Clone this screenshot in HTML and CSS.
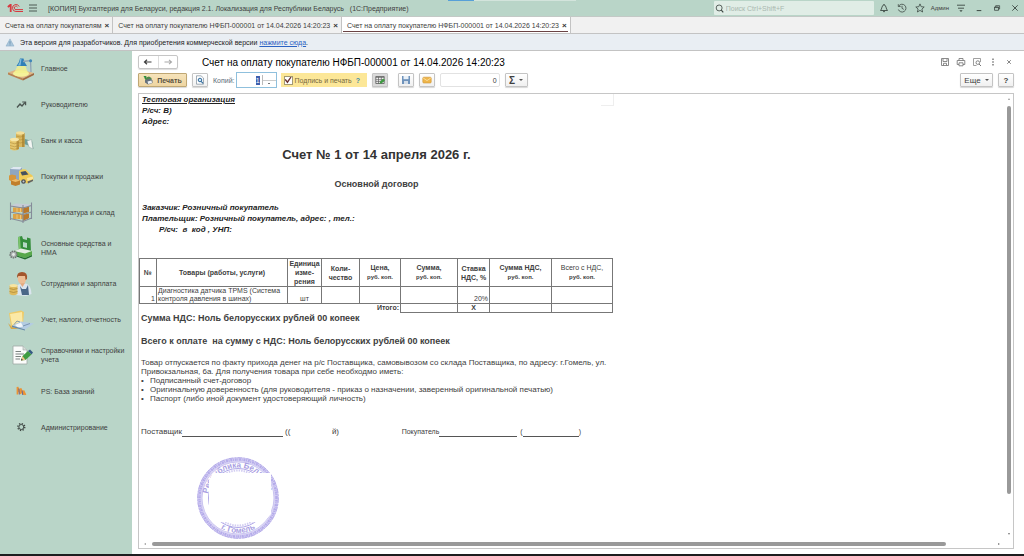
FILE: index.html
```html
<!DOCTYPE html>
<html lang="ru">
<head>
  <meta charset="UTF-8">
  <meta name="viewport" content="width=device-width, initial-scale=1.0">
  <title>Счет на оплату покупателю</title>
  <link rel="stylesheet" href="styles.css">
</head>
<body>
  <!-- Title bar -->
  <header class="titlebar">
    <div class="top-strip"></div>
    <svg class="logo" viewBox="0 0 16 10">
      <path d="M0.3 3.2 3 1H4.6V9H2.8V3.8L1.2 4.8Z" fill="#d8383f"/>
      <path d="M12.2 3.6A3.5 3.5 0 1 0 9 8.5H16M10.5 4.1A1.7 1.7 0 1 0 9 6.6H16" fill="none" stroke="#d8383f" stroke-width="1"/>
    </svg>
    <button class="icon-button menu-button" aria-label="Меню">
      <svg viewBox="0 0 10 10"><path d="M1 2H9M1 5H9M1 8H9" stroke="#4c5a54" stroke-width="1" fill="none"/></svg>
    </button>
    <span class="app-title">[КОПИЯ] Бухгалтерия для Беларуси, редакция 2.1. Локализация для Республики Беларусь &nbsp; (1С:Предприятие)</span>
    <label class="search">
      <svg viewBox="0 0 10 10"><circle cx="4.6" cy="4.4" r="3.3" fill="none" stroke="#39423e" stroke-width="0.9"/><path d="M7 6.8 9.2 9.2" stroke="#39423e" stroke-width="1.3"/></svg>
      <input type="text" placeholder="Поиск Ctrl+Shift+F" aria-label="Поиск">
    </label>
    <div class="title-actions">
      <button class="icon-button" aria-label="Уведомления"><svg viewBox="0 0 10 10"><path d="M1.5 7.5C3.2 6 2.6 2 5 1.8 7.4 2 6.8 6 8.5 7.5ZM4 8.3Q5 9.6 6 8.3M5 1V2" fill="none" stroke="#3c4843" stroke-width="0.9"/></svg></button>
      <button class="icon-button" aria-label="История"><svg viewBox="0 0 10 10"><path d="M1.8 3A3.9 3.9 0 1 1 1.4 6.5M1.3 1.2V3.5H3.6M5 2.8V5.3L6.8 6.4" fill="none" stroke="#3c4843" stroke-width="0.8"/></svg></button>
      <button class="icon-button" aria-label="Избранное"><svg viewBox="0 0 10 10"><path d="M5 0.9 6.2 3.7 9.2 4 6.9 6 7.6 9 5 7.4 2.4 9 3.1 6 0.8 4 3.8 3.7Z" fill="none" stroke="#3c4843" stroke-width="0.8"/></svg></button>
      <span class="user">Админ</span>
      <button class="icon-button" aria-label="Настройки"><svg viewBox="0 0 10 10"><path d="M1 2.2H9M2 5.2H8" stroke="#3c4843" stroke-width="0.9"/><path d="M3.4 7.3H6.6L5 9Z" fill="#3c4843"/></svg></button>
      <button class="icon-button" aria-label="Свернуть"><svg viewBox="0 0 10 10"><path d="M2.7 7.6H7.3" stroke="#3c4843" stroke-width="1"/></svg></button>
      <button class="icon-button" aria-label="Восстановить"><svg viewBox="0 0 10 10"><path d="M2.5 4H6.5V7.3H2.5ZM3.7 4V2.7H7.6V6H6.5M2.5 4.6H6.5" fill="none" stroke="#3c4843" stroke-width="0.8"/></svg></button>
      <button class="icon-button" aria-label="Закрыть"><svg viewBox="0 0 10 10"><path d="M2.3 2.3 7.7 7.7M7.7 2.3 2.3 7.7" stroke="#3c4843" stroke-width="0.9"/></svg></button>
    </div>
  </header>

  <!-- Open windows -->
  <nav class="tabs">
    <a href="#" class="tab">Счета на оплату покупателям <span class="tab-close">×</span></a>
    <a href="#" class="tab">Счет на оплату покупателю НФБП-000001 от 14.04.2026 14:20:23 <span class="tab-close">×</span></a>
    <a href="#" class="tab active">Счет на оплату покупателю НФБП-000001 от 14.04.2026 14:20:23 <span class="tab-close">×</span></a>
  </nav>

  <div class="notice">
    <svg viewBox="0 0 10 10"><path d="M5 1 9.4 9H0.6Z" fill="#a9c6dc" stroke="#86a9c4" stroke-width="0.6"/><path d="M5 3.6V6.4M5 7.2V8.2" stroke="#5f86a5" stroke-width="0.9"/></svg>
    <p>Эта версия для разработчиков. Для приобретения коммерческой версии <a href="#">нажмите сюда</a>.</p>
  </div>

  <div class="workspace">
    <!-- Sections -->
    <nav class="sidebar">
      <a href="#" class="section">
        <svg viewBox="0 0 26 24">
          <path d="M0 15.5 10 12 26 16 15 21.5Z" fill="#e0b483"/><path d="M0 15.5 15 21.5V23.5L0 17.5Z" fill="#b98252"/><path d="M15 21.5 26 16V18L15 23.5Z" fill="#a06a42"/>
          <ellipse cx="13" cy="16.5" rx="8" ry="3.2" fill="#f5f29a"/><path d="M10 8H17L20 16H6Z" fill="#f2f08c" opacity="0.8"/>
          <path d="M12 1.5H15.5L16.5 5 19 9H8.5L11 5Z" fill="#2f7fb8"/><path d="M12.2 2 11.8 5 10 8.5H12.5L13.5 2Z" fill="#7fbbe0"/>
          <path d="M15 4.5 22.5 3.5 23 15" fill="none" stroke="#8ea3b5" stroke-width="1.3"/><circle cx="22.6" cy="3.8" r="1.5" fill="#3e86b8"/>
        </svg>
        <span>Главное</span>
      </a>
      <a href="#" class="section">
        <svg viewBox="0 0 26 24"><path d="M9 14.5 12 11 14 13 17 9.5" fill="none" stroke="#4b5551" stroke-width="1.3"/><path d="M14.2 9H17.6V12.3" fill="none" stroke="#4b5551" stroke-width="1.2"/></svg>
        <span>Руководителю</span>
      </a>
      <a href="#" class="section">
        <svg viewBox="0 0 26 24">
          <path d="M13 14 17 10 24 12 25.5 20 22 17Z" fill="#6e9d96"/><path d="M19 12 23.5 10.5 25 20 21 18Z" fill="#f3f6f3" stroke="#93a8a2" stroke-width="0.5"/>
          <path d="M8 4V18H16.5V4Z" fill="#d9b75c"/><path d="M14 4V18H16.5V4Z" fill="#b58f3a"/><ellipse cx="12.2" cy="4" rx="4.2" ry="1.7" fill="#f3de98"/>
          <path d="M8 7Q12 9 16.5 7M8 10Q12 12 16.5 10M8 13Q12 15 16.5 13" fill="none" stroke="#a98435" stroke-width="0.5"/>
          <path d="M2 10.5V20Q6.5 23 11 20V10.5Z" fill="#e6c76e"/><path d="M8.5 11V21L11 20V10.5Z" fill="#bb9643"/><ellipse cx="6.5" cy="10.5" rx="4.5" ry="1.8" fill="#f7e6a8"/>
          <path d="M2 13.5Q6.5 16 11 13.5M2 16.5Q6.5 19 11 16.5M2 19Q6.5 21.5 11 19" fill="none" stroke="#a98435" stroke-width="0.5"/>
        </svg>
        <span>Банк и касса</span>
      </a>
      <a href="#" class="section">
        <svg viewBox="0 0 26 24">
          <path d="M2 5 5 3H14V16H2Z" fill="#8fa6c0"/><path d="M2 5 5 3H14L12 5.5Z" fill="#dfe8f1"/>
          <path d="M11 7Q13 4.500 18 5.500L22 10Q25.500 11 25.500 14.500L25 17 19 19.500 11 16Z" fill="#f0cb55"/><path d="M12.500 8 17.500 7 20.500 10.500 14 11.500Z" fill="#46525e"/><path d="M19 14 25 12.500V15L19.500 17Z" fill="#f9e59b"/>
          <circle cx="15.500" cy="17.500" r="2.300" fill="#4c5158"/><circle cx="15.500" cy="17.500" r="1" fill="#c4c8cc"/><path d="M19.500 17.500 25 15.500V17L20 19.500Z" fill="#5d6268"/>
          <path d="M1 11.500 4 10.500 8 11.500V16L4 17.500 1 16Z" fill="#d6963c"/><path d="M3 16.500 8 15 12 16.500V20.500L7.500 22 3 20.500Z" fill="#c17f2c"/><path d="M3 16.500 8 15 12 16.500 7.500 18Z" fill="#efbc6a"/>
        </svg>
        <span>Покупки и продажи</span>
      </a>
      <a href="#" class="section">
        <svg viewBox="0 0 26 24">
          <path d="M2 6 8 3.5 24 4.5 15 8Z" fill="#c6ccd6"/><path d="M5 7.5H20V12H5ZM5 14H20V19H5Z" fill="#dca246"/><path d="M15 8.5 21 6.5V12L15 13.5ZM15 15 21 13.5V18L15 21Z" fill="#b9782b"/>
          <path d="M9 8V12.5M12.5 8V12.5M9 14.5V19M12.5 15V20" stroke="#f4cf86" stroke-width="0.8"/>
          <path d="M2.5 2.5V20M15 5V23M23.5 2.5V19M2.5 6 15 8 23.5 5.5M2.5 12 15 14.5 23.5 12M2.5 18.5 15 21.5 23.5 18" fill="none" stroke="#858c99" stroke-width="1.1"/>
        </svg>
        <span>Номенклатура и склад</span>
      </a>
      <a href="#" class="section">
        <svg viewBox="0 0 26 24">
          <path d="M10 1 14 0 15 3 19 4V1.5L22.5 2.5 23 17 11 15Z" fill="#348d3b"/><path d="M10 1 12 1 13 15 11 15Z" fill="#7cc46c"/><path d="M15 6 19 7V12L15 11Z" fill="#b6d8c5"/>
          <path d="M6 15 13 12.5 24 15V19L17 22 7 19Z" fill="#58a84c"/><path d="M6 15 13 12.5 24 15 17 17.5Z" fill="#e4ece4"/><path d="M7 19 17 22 24 19V20.5L17 23.5 7 20Z" fill="#216d2c"/>
          <circle cx="5.5" cy="18.5" r="3.4" fill="#a9afae" stroke="#6a706e" stroke-width="1.4" stroke-dasharray="1.4 0.9"/><circle cx="5.5" cy="18.5" r="1.4" fill="#e5e9e7"/>
        </svg>
        <span>Основные средства и НМА</span>
      </a>
      <a href="#" class="section">
        <svg viewBox="0 0 26 24">
          <path d="M7 23Q6 13 12 12L18 11.5Q23 13 23.5 22L18 24Z" fill="#dbe5ee"/><path d="M12 14 14 23H21L20 13 18 17H14Z" fill="#4a6787"/>
          <ellipse cx="14" cy="6.8" rx="4.2" ry="5.2" fill="#eebd94"/><path d="M9 6Q8.5 0 14 0 20 0 19 7L17.6 8 17 4 10.5 4Z" fill="#a3552c"/><path d="M12 11.5 14.5 15 17 11Z" fill="#e5aa80"/>
          <path d="M1.5 13.5V22Q5.5 24.5 9.5 22V13.5Z" fill="#dfba5c"/><ellipse cx="5.5" cy="13.5" rx="4" ry="1.6" fill="#f7e4a0"/><path d="M1.5 16.5Q5.5 18.5 9.5 16.5M1.5 19.5Q5.5 21.5 9.5 19.5" fill="none" stroke="#a17c2e" stroke-width="0.6"/>
        </svg>
        <span>Сотрудники и зарплата</span>
      </a>
      <a href="#" class="section">
        <svg viewBox="0 0 26 24">
          <path d="M1 5 13 2.5 16 4 15 16 3 19Z" fill="#efcb68"/><path d="M2 6 14 4 14.5 14 4 17Z" fill="#fbe9a6"/><path d="M0 15 4 19 11 21 3 21Z" fill="#d6a94c"/>
          <path d="M4 17.5 13 13.5 26 15.5 17 21.5Z" fill="#b4cce3"/><path d="M7 17 13 14.5 15 18.5 10 19.5Z" fill="#f4f7fa"/><path d="M15 18 22 15.5M6 16.5 9 13 12 14" stroke="#6c89a6" stroke-width="0.8" fill="none"/><path d="M4 17.5 17 21.5V22.5L4 19Z" fill="#6586a8"/>
        </svg>
        <span>Учет, налоги, отчетность</span>
      </a>
      <a href="#" class="section">
        <svg viewBox="0 0 26 24">
          <path d="M5 3H15L19 7V21H5Z" fill="#fbfcfb" stroke="#9fa8a4" stroke-width="0.8"/><path d="M15 3V7H19" fill="#d8dedb" stroke="#9fa8a4" stroke-width="0.6"/>
          <path d="M7.5 8.5H13M7.5 11H16M7.5 13.5H13M7.5 16H12" stroke="#6c7572" stroke-width="0.9"/>
          <path d="M13 17.5 14.5 13 20 8 23.5 11.5 17.5 17Z" fill="#3f9c42"/><path d="M20 8 22 6.5 25 9.5 23.5 11.5Z" fill="#355a83"/><path d="M13 17.5 14.5 13 17.5 17Z" fill="#eec388"/><path d="M13 17.5 13.6 15.6 14.9 17Z" fill="#333"/>
        </svg>
        <span>Справочники и настройки учета</span>
      </a>
      <a href="#" class="section">
        <svg viewBox="0 0 26 24"><path d="M9.5 15.5V8L12.5 15V9.5L15.5 15.5V11.5L17.5 16" fill="none" stroke="#ec9233" stroke-width="1.8"/><path d="M10.8 9.5 11.4 15.5M14 11.5 14.8 16" stroke="#5a62a0" stroke-width="0.9"/></svg>
        <span>PS: База знаний</span>
      </a>
      <a href="#" class="section">
        <svg viewBox="0 0 26 24"><circle cx="13.3" cy="12" r="2.5" fill="none" stroke="#3e4643" stroke-width="1"/><circle cx="13.3" cy="12" r="3.5" fill="none" stroke="#3e4643" stroke-width="1.3" stroke-dasharray="1.3 1.45"/></svg>
        <span>Администрирование</span>
      </a>
    </nav>

    <main class="window">
      <div class="window-head">
        <div class="history-buttons">
          <button aria-label="Назад"><svg viewBox="0 0 10 8"><path d="M1.5 4H8.5M4 1.8 1.5 4 4 6.2" fill="none" stroke="#3d3d3d" stroke-width="1.2"/></svg></button>
          <button aria-label="Вперед"><svg viewBox="0 0 10 8"><path d="M1.5 4H8.5M6 1.8 8.5 4 6 6.2" fill="none" stroke="#a8a8a8" stroke-width="1.1"/></svg></button>
        </div>
        <h1>Счет на оплату покупателю НФБП-000001 от 14.04.2026 14:20:23</h1>
        <div class="window-actions">
          <button class="icon-button" aria-label="Сохранить"><svg viewBox="0 0 10 10"><path d="M1.5 1.5H8.5V8.5H1.5ZM3 1.5V4.5H7V1.5M3.5 8.5V6.3H6.5V8.5" fill="none" stroke="#7e7e7e" stroke-width="0.9"/></svg></button>
          <button class="icon-button" aria-label="Печать"><svg viewBox="0 0 10 10"><path d="M3 3.5V1.5H7V3.5M3 7.5H1.2V3.5H8.8V7.5H7M3 5.8H7V8.8H3Z" fill="none" stroke="#7e7e7e" stroke-width="0.9"/></svg></button>
          <button class="icon-button" aria-label="Просмотр"><svg viewBox="0 0 10 10"><path d="M8.5 5V1.5H1.5V8.5H4.5" fill="none" stroke="#888" stroke-width="0.8"/><circle cx="5.8" cy="5.6" r="1.8" fill="none" stroke="#777" stroke-width="0.9"/><path d="M7 7 9 9" stroke="#777" stroke-width="1"/></svg></button>
          <button class="icon-button" aria-label="Меню окна"><svg viewBox="0 0 10 10"><path d="M5 1.6V3M5 4.3V5.7M5 7V8.4" stroke="#666" stroke-width="1.3"/></svg></button>
          <button class="icon-button" aria-label="Закрыть окно"><svg viewBox="0 0 10 10"><path d="M3.2 3.2 6.8 6.8M6.8 3.2 3.2 6.8" stroke="#777" stroke-width="0.9"/></svg></button>
        </div>
      </div>

      <!-- Toolbar -->
      <div class="toolbar">
        <button class="btn print">
          <svg viewBox="0 0 10 10"><path d="M1.5 3 6 1.5 8.5 3V5L3 6Z" fill="#4f8a4a"/><path d="M0.5 1 3.5 1 2.5 4.5Z" fill="#2f8f3d"/><path d="M2 5 7 3.8 9.5 5.2V8L5 9.4 2 7.5Z" fill="#65707c"/><path d="M4.5 6.5 8.5 5.6 9 8 5.2 9Z" fill="#eef2f6"/></svg>
          Печать
        </button>
        <button class="btn square" aria-label="Предварительный просмотр"><svg viewBox="0 0 10 10"><path d="M1.5 0.8H6L8.5 3V9.2H1.5Z" fill="#fff" stroke="#7e8d9a" stroke-width="0.7"/><circle cx="5" cy="5" r="1.8" fill="#cfe4f4" stroke="#2f6a9c" stroke-width="1"/><path d="M6.2 6.3 8 8.3" stroke="#2f6a9c" stroke-width="1.2"/></svg></button>
        <label class="copies-label" for="copies">Копий:</label>
        <div class="copies">
          <input type="text" id="copies" value="1">
          <div class="spin"><button aria-label="Больше"></button><button aria-label="Меньше"></button></div>
        </div>
        <div class="stamp-option">
          <input type="checkbox" id="withStamp" checked>
          <label for="withStamp">Подпись и печать</label>
          <a href="#" class="help">?</a>
        </div>
        <button class="btn square pressed" aria-label="Редактирование"><svg viewBox="0 0 10 10"><path d="M0.8 1.5H9.2V8.5H0.8Z" fill="#f4f4f4" stroke="#5c5c5c" stroke-width="0.8"/><path d="M0.8 2.4H9.2M0.8 4.7H9.2M0.8 6.6H9.2M3.5 2V8.5M6.3 2V8.5" stroke="#5c5c5c" stroke-width="0.7"/><path d="M4.5 8.8 5.2 6.4 8.3 3.5 10 5.2 6.8 8.2Z" fill="#3f9c42"/></svg></button>
        <button class="btn square spaced" aria-label="Сохранить файл"><svg viewBox="0 0 10 10"><path d="M1 1H9V9H1Z" fill="#6f93bb"/><path d="M2.5 1H7.5V4.2H2.5Z" fill="#eaf1f8"/><path d="M3 6H7V9H3Z" fill="#d4dee9"/></svg></button>
        <button class="btn square" aria-label="Отправить"><svg viewBox="0 0 10 10"><rect x="0.8" y="2.2" width="8.4" height="5.8" rx="1" fill="#eeb54a" stroke="#cf9533" stroke-width="0.6"/><path d="M1.2 3 5 5.6 8.8 3" fill="none" stroke="#fae0a4" stroke-width="0.9"/></svg></button>
        <input class="sum-field" type="text" value="0" aria-label="Сумма">
        <button class="btn sigma">Σ <i class="caret"></i></button>
        <button class="btn more">Еще <i class="caret"></i></button>
        <button class="btn question">?</button>
      </div>

      <!-- Printed form -->
      <div class="viewer">
        <div class="page">
          <span class="page-edge"></span>
          <div class="party">
            <p><u>Тестовая организация</u></p>
            <p>Р/сч: В)</p>
            <p>Адрес:</p>
          </div>
          <h2>Счет № 1 от 14 апреля 2026 г.</h2>
          <h3>Основной договор</h3>
          <div class="party customer">
            <p>Заказчик: Розничный покупатель</p>
            <p>Плательщик: Розничный покупатель, адрес: , тел.:</p>
            <p class="indent">Р/сч: &nbsp;в &nbsp;код , УНП:</p>
          </div>
          <table class="goods">
            <colgroup>
              <col class="c-num"><col class="c-name"><col class="c-unit"><col class="c-qty"><col class="c-price"><col class="c-sum"><col class="c-rate"><col class="c-vat"><col class="c-total">
            </colgroup>
            <thead>
              <tr>
                <th>№</th>
                <th>Товары (работы, услуги)</th>
                <th class="tight">Единица изме-<br>рения</th>
                <th>Коли-<br>чество</th>
                <th>Цена,<br><small>руб. коп.</small></th>
                <th>Сумма,<br><small>руб. коп.</small></th>
                <th>Ставка НДС, %</th>
                <th>Сумма НДС,<br><small>руб. коп.</small></th>
                <th class="light">Всего с НДС,<br><small>руб. коп.</small></th>
              </tr>
            </thead>
            <tbody>
              <tr>
                <td class="right">1</td>
                <td>Диагностика датчика TPMS (Система контроля давления в шинах)</td>
                <td class="center">шт</td>
                <td></td>
                <td></td>
                <td></td>
                <td class="right">20%</td>
                <td></td>
                <td></td>
              </tr>
            </tbody>
            <tfoot>
              <tr>
                <td class="total-label" colspan="5">Итого:</td>
                <td></td>
                <td class="center">Х</td>
                <td></td>
                <td></td>
              </tr>
            </tfoot>
          </table>
          <p class="amount">Сумма НДС: Ноль белорусских рублей 00 копеек</p>
          <p class="amount">Всего к оплате &nbsp;на сумму с НДС: Ноль белорусских рублей 00 копеек</p>
          <div class="terms">
            <p>Товар отпускается по факту прихода денег на р/с Поставщика, самовывозом со склада Поставщика, по адресу: г.Гомель, ул. Привокзальная, 6а. Для получения товара при себе необходмо иметь:</p>
            <ul>
              <li>Подписанный счет-договор</li>
              <li>Оригинальную доверенность (для руководителя - приказ о назначении, заверенный оригинальной печатью)</li>
              <li>Паспорт (либо иной документ удостоверяющий личность)</li>
            </ul>
          </div>
          <div class="signatures">
            <div class="sign">Поставщик<span class="line"></span><span class="name"><span>((</span><span>й)</span></span></div>
            <div class="sign buyer">Покупатель<span class="line"></span><span class="bracket">(</span><span class="line short"></span>)</div>
          </div>
          <svg class="stamp" viewBox="0 0 84 84">
            <defs>
              <path id="arcTop" d="M11.5 42A30.5 30.5 0 0 1 72.5 42"/>
              <path id="arcBottom" d="M7 42A35 35 0 0 0 77 42"/>
            </defs>
            <circle cx="42" cy="42" r="38.5" fill="none" stroke="#dad5f5" stroke-width="4.5"/>
            <circle cx="42" cy="42" r="40.3" fill="none" stroke="#aaa0e5" stroke-width="0.8" stroke-dasharray="5 1 2 1"/>
            <circle cx="42" cy="42" r="38.5" fill="none" stroke="#b5acea" stroke-width="2.5" stroke-dasharray="1 0.8 2 0.6"/>
            <circle cx="42" cy="42" r="36" fill="none" stroke="#b5acea" stroke-width="0.7"/>
            <circle cx="42" cy="42" r="29.5" fill="none" stroke="#b0a7e8" stroke-width="1"/>
            <circle cx="42" cy="42" r="27.5" fill="none" stroke="#d3cef2" stroke-width="2" stroke-dasharray="1.5 1"/>
            <text class="stamp-text"><textPath href="#arcTop" startOffset="50%">Республика Беларусь</textPath></text>
            <text class="stamp-text"><textPath href="#arcBottom" startOffset="50%">г. Гомель</textPath></text>
            <path d="M17 17H75V58L68 66H20L13 57V24Z" fill="#fff"/>
          </svg>
        </div>
        <div class="scroll-y"><i class="arrow up"></i><span class="thumb"></span><i class="arrow down"></i></div>
        <div class="scroll-x"><i class="arrow left"></i><span class="thumb"></span><i class="arrow right"></i></div>
      </div>
    </main>
  </div>
  <div class="taskbar"></div>
</body>
</html>
```
FILE: styles.css
```css
* {
  box-sizing: border-box;
}

body {
  margin: 0;
  height: 100vh;
  display: flex;
  flex-direction: column;
  overflow: hidden;
  font-family: "Liberation Sans", Arial, sans-serif;
  font-size: 7px;
  color: #404040;
  background: #fff;
}

p, h1, h2, h3, ul {
  margin: 0;
  padding: 0;
}

button, input {
  font-family: inherit;
  font-size: inherit;
  color: inherit;
  margin: 0;
  padding: 0;
}

a {
  color: inherit;
  text-decoration: none;
}

.icon-button {
  display: block;
  width: 10px;
  height: 10px;
  border: none;
  background: none;
}

.icon-button svg {
  display: block;
  width: 10px;
  height: 10px;
}

/* Title bar */
.titlebar {
  position: relative;
  display: flex;
  align-items: center;
  height: 16px;
  padding: 0 4px 0 7px;
  background: #b9d5c8;
  flex-shrink: 0;
}

.top-strip {
  position: absolute;
  top: 0;
  left: 448px;
  width: 128px;
  height: 1px;
  background: linear-gradient(to right, #57a0d8 26px, #d3e4dc 26px);
}

.logo {
  width: 16px;
  height: 10px;
}

.menu-button {
  margin-left: 5px;
}

.app-title {
  margin-left: 10px;
  white-space: nowrap;
}

.search {
  display: flex;
  align-items: center;
  gap: 2px;
  width: 160px;
  height: 14px;
  margin-left: auto;
  padding-left: 1px;
  background: #e0ede6;
  border-radius: 1px;
}

.search svg {
  width: 9px;
  height: 9px;
}

.search input {
  flex: 1;
  min-width: 0;
  border: none;
  background: none;
  outline: none;
}

.search input::placeholder {
  color: #a9b8b0;
}

.title-actions {
  display: flex;
  align-items: center;
  gap: 8px;
  margin-left: 5px;
}

.user {
  font-size: 6px;
  margin: 0 -1px 0 -2px;
}

/* Tabs */
.tabs {
  display: flex;
  height: 18px;
  background: #f1f1f1;
  border-top: 1px solid #c3c9c6;
  border-bottom: 1px solid #c3c3c3;
  flex-shrink: 0;
}

.tab {
  display: flex;
  align-items: center;
  gap: 3px;
  padding: 0 3px 0 5px;
  border-right: 1px solid #c3c3c3;
  white-space: nowrap;
}

.tab.active {
  background: linear-gradient(#6a4344, #6a4344) no-repeat 1px 14px / calc(100% - 3px) 1px, #fff;
}

.tab-close {
  font-size: 8px;
  font-weight: bold;
  color: #333;
}

/* Developer notice */
.notice {
  display: flex;
  align-items: center;
  gap: 5px;
  height: 17px;
  padding: 0 5px;
  background: #e9eef3;
  border-bottom: 1px solid #c3c3c3;
  color: #222;
  flex-shrink: 0;
}

.notice svg {
  width: 10px;
  height: 9px;
}

.notice a {
  color: #2a62c4;
  text-decoration: underline;
}

.workspace {
  display: flex;
  flex: 1;
  min-height: 0;
}

/* Sections */
.sidebar {
  display: grid;
  grid-auto-rows: 1fr;
  width: 132px;
  padding: 0 6px 109px 8px;
  background: #b9d5c8;
  flex-shrink: 0;
}

.section {
  display: flex;
  align-items: center;
  gap: 7px;
  line-height: 9px;
}

.section svg {
  width: 26px;
  height: 24px;
  flex-shrink: 0;
}

/* Window */
.window {
  display: flex;
  flex-direction: column;
  flex: 1;
  min-width: 0;
  padding: 4px 10px 5px 6px;
}

.window-head {
  display: flex;
  align-items: center;
  height: 14px;
}

.history-buttons {
  display: flex;
  width: 40px;
  height: 14px;
  border: 1px solid #c6c6c6;
  border-radius: 2px;
  box-shadow: 0 1px 1px #ddd;
}

.history-buttons button {
  display: flex;
  align-items: center;
  justify-content: center;
  flex: 1;
  border: none;
  background: none;
}

.history-buttons button + button {
  border-left: 1px solid #ddd;
}

.history-buttons svg {
  width: 10px;
  height: 8px;
}

h1 {
  margin-left: 24px;
  font-size: 10px;
  font-weight: normal;
  color: #000;
  white-space: nowrap;
}

.window-actions {
  display: flex;
  gap: 6px;
  margin-left: auto;
}

/* Toolbar */
.toolbar {
  display: flex;
  align-items: center;
  height: 16px;
  margin: 3px 0 5px;
}

.btn {
  display: flex;
  align-items: center;
  justify-content: center;
  gap: 4px;
  height: 14px;
  border: 1px solid #c4c4c4;
  border-radius: 1px;
  background: linear-gradient(#fff, #f0f0f0);
  box-shadow: 0 1px 1px #d8d8d8;
}

.btn svg {
  width: 10px;
  height: 10px;
}

.print {
  width: 49px;
  margin-right: 5px;
  border-color: #bfa774;
  background: linear-gradient(#f6e3ba, #eed5a1);
  font-weight: bold;
  color: #5a5242;
}

.square {
  width: 16px;
}

.pressed {
  background: #dadada;
}

.square.spaced {
  margin-left: 10px;
  margin-right: 5px;
}

.copies-label {
  margin: 0 1px 0 5px;
  color: #5b6b78;
}

.copies {
  display: flex;
  align-items: center;
  width: 41px;
  height: 16px;
  margin-right: 4px;
  border: 1px solid #8fc0dd;
}

.copies input {
  flex: 1;
  min-width: 0;
  height: 10px;
  padding-right: 2px;
  border: none;
  border-right: 1px solid #bbb;
  outline: none;
  text-align: right;
  color: #fff;
  background: linear-gradient(#3f5fae, #3f5fae) no-repeat right 2px center / 4px 9px;
}

.spin {
  display: flex;
  flex-direction: column;
  width: 13px;
}

.spin button {
  height: 6px;
  border: none;
  background: radial-gradient(#777 1px, transparent 1px);
}

.spin button + button {
  border-top: 1px solid #ccc;
}

.stamp-option {
  display: flex;
  align-items: center;
  gap: 2px;
  width: 86px;
  height: 14px;
  margin-right: 5px;
  padding-left: 3px;
  background: #fce798;
  color: #776a3f;
}

.stamp-option input {
  appearance: none;
  display: grid;
  place-items: center;
  width: 9px;
  height: 9px;
  border: 1px solid #a39a74;
  background: #fff;
}

.stamp-option input:checked::before {
  content: "";
  width: 7px;
  height: 7px;
  background: #6d3434;
  clip-path: polygon(0 45%, 18% 35%, 40% 65%, 88% 0, 100% 10%, 42% 100%);
}

.help {
  margin-left: 2px;
  font-weight: bold;
  color: #3d8ca8;
}

.sum-field {
  width: 60px;
  height: 14px;
  margin: 0 5px;
  padding-right: 2px;
  border: 1px solid #e2e2e2;
  border-radius: 2px;
  text-align: right;
}

.sigma {
  width: 23px;
  font-size: 10px;
  font-weight: bold;
}

.caret {
  border: 2px solid transparent;
  border-top-color: #555;
  border-bottom: none;
}

.more {
  width: 33px;
  margin-left: auto;
  margin-right: 5px;
  font-size: 8px;
}

.question {
  width: 16px;
  font-size: 8px;
  font-weight: bold;
}

/* Document viewer */
.viewer {
  display: grid;
  grid-template-columns: 1fr 8px;
  grid-template-rows: 1fr 8px;
  flex: 1;
  min-height: 0;
  border: 1px solid #c6c6c6;
}

.page {
  position: relative;
  width: 475px;
  font-size: 7px;
  overflow: hidden;
}

.page-edge {
  position: absolute;
  top: 0;
  right: 0;
  width: 13px;
  height: 12px;
  border-right: 1px solid #eee;
  border-bottom: 1px solid #eee;
}

.party {
  padding-left: 3px;
  font-size: 8px;
  font-weight: bold;
  font-style: italic;
  line-height: 11px;
  color: #222;
}

.indent {
  padding-left: 17px;
}

h2 {
  margin-top: 20px;
  font-size: 13px;
  line-height: 16px;
  text-align: center;
  color: #333;
}

h3 {
  margin-top: 15px;
  font-size: 9px;
  line-height: 12px;
  text-align: center;
}

.customer {
  margin: 12px 0 23px;
}

.goods {
  width: 473px;
  table-layout: fixed;
  border-collapse: collapse;
  line-height: 9px;
}

.goods th,
.goods td {
  padding: 0 1px;
  border: 1px solid #777;
}

.goods th {
  height: 27px;
}

.goods small {
  font-size: 6px;
  font-weight: bold;
}

.goods .light {
  font-weight: normal;
}

.goods tbody td {
  height: 17px;
  line-height: 8px;
  vertical-align: bottom;
}

.goods tfoot td {
  height: 9px;
  line-height: 8px;
  font-weight: bold;
}

.goods .total-label {
  border-left: none;
  border-bottom: none;
  text-align: right;
}

.goods .right {
  text-align: right;
}

.goods .center {
  text-align: center;
}

.goods .tight {
  padding: 0;
}

.c-num { width: 17px; }
.c-name { width: 131px; }
.c-unit { width: 34px; }
.c-qty { width: 38px; }
.c-price { width: 41px; }
.c-sum { width: 57px; }
.c-rate { width: 32px; }
.c-vat { width: 62px; }
.c-total { width: 61px; }

.amount {
  padding-left: 2px;
  font-size: 9px;
  font-weight: bold;
  line-height: 10px;
}

.amount + .amount {
  margin-top: 13px;
}

.terms {
  margin-top: 12px;
  padding-left: 2px;
  font-size: 8px;
  line-height: 9px;
}

.terms ul {
  list-style: none;
}

.terms li::before {
  content: "•";
  display: inline-block;
  width: 9px;
}

.signatures {
  display: flex;
  justify-content: space-between;
  align-items: flex-end;
  margin-top: 23px;
  padding: 0 33px 0 2px;
  line-height: 11px;
}

.sign {
  display: flex;
  font-size: 8px;
}

.sign .line {
  width: 101px;
  border-bottom: 1px solid #555;
}

.name {
  display: flex;
  justify-content: space-between;
  width: 54px;
  margin-left: 2px;
}

.buyer {
  font-size: 7px;
}

.buyer .line {
  width: 78px;
}

.bracket {
  margin-left: 3px;
}

.buyer .line.short {
  width: 56px;
}

.stamp {
  display: block;
  width: 84px;
  height: 84px;
  margin: 19px 0 0 57px;
}

.stamp-text {
  font-size: 8px;
  font-weight: bold;
  fill: #a89eE2;
  text-anchor: middle;
}

/* Scrollbars */
.scroll-y,
.scroll-x {
  display: flex;
  align-items: center;
}

.scroll-y {
  flex-direction: column;
  padding: 3px 0 4px;
}

.scroll-x {
  padding: 0 4px;
}

.thumb {
  background: #999;
  border-radius: 2px;
}

.scroll-y .thumb {
  width: 4px;
  flex: 1;
  margin: 6px 0 39px;
}

.scroll-x .thumb {
  height: 4px;
  flex: 1;
  margin: 0 52px 0 6px;
}

.arrow {
  border: 1px solid transparent;
}

.arrow.up { border-bottom: 2px solid #999; }
.arrow.down { border-top: 2px solid #777; }
.arrow.left { border-right: 2px solid #999; }
.arrow.right { border-left: 2px solid #777; }

.taskbar {
  height: 2px;
  background: #1d1d1f;
  flex-shrink: 0;
}
```
